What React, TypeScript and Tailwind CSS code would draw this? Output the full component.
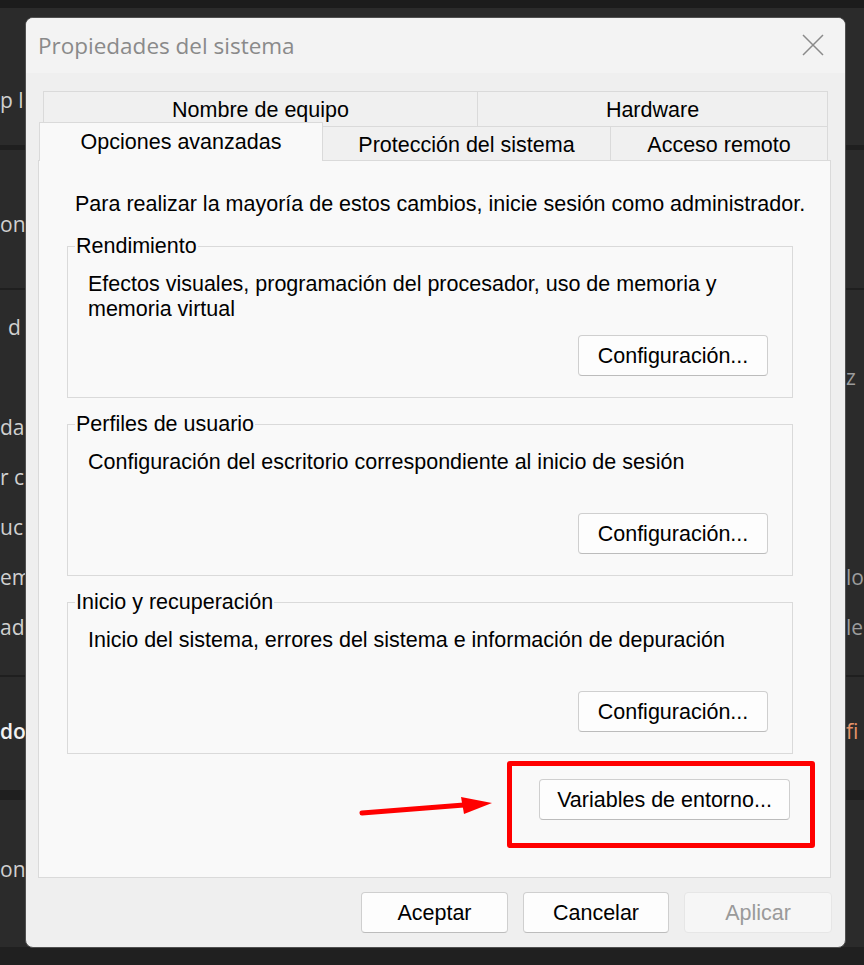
const sans = "font-['Liberation_Sans',Arial,sans-serif]"

interface BgLine {
  left?: string
  right?: string
  strong?: boolean
  accent?: boolean
  indent?: boolean
}

function BgRow({ lines, className, lineClass }: { lines: BgLine[]; className: string; lineClass: string }) {
  return (
    <div className={`flex flex-col bg-[#2b2b2b] ${className}`}>
      {lines.map((l, i) => (
        <div key={i} className={`flex items-center justify-between ${lineClass}`}>
          <div className={`w-[40px] whitespace-nowrap ${l.indent ? 'pl-[8px]' : ''}`}>
            <span className={l.strong ? 'font-semibold text-[#f2f2f2]' : 'text-[#d0d0d0]'}>{l.left ?? ''}</span>
          </div>
          <div className="w-[18px] whitespace-nowrap">
            <span className={l.accent ? 'text-[#e5936a]' : 'text-[#9c9c9c]'}>{l.right ?? ''}</span>
          </div>
        </div>
      ))}
    </div>
  )
}

function WinButton({ label, width, disabled = false }: { label: string; width: string; disabled?: boolean }) {
  return (
    <button
      className={`h-[41px] ${width} rounded-[4px] border pt-[2px] text-[21.5px] leading-none ${
        disabled
          ? 'border-[#e6e6e6] bg-[#f6f6f6] text-[#9a9a9a]'
          : 'border-[#cfcfcf] border-b-[#bcbcbc] bg-[#fdfdfd] text-black'
      }`}
    >
      {label}
    </button>
  )
}

function Group({ title, lines }: { title: string; lines: string[] }) {
  return (
    <fieldset className="ml-[28px] w-[726px] border border-[#dadada] px-[7px]">
      <legend className="px-[1px] pt-[1px] leading-[23px]">{title}</legend>
      <div className="pl-[13px] pt-[14px]">
        <div className="h-[50px] leading-[25px]">
          {lines.map((t) => (
            <p key={t}>{t}</p>
          ))}
        </div>
        <div className="mt-[13px] flex justify-end pb-[21px] pr-[17px]">
          <WinButton label="Configuración..." width="w-[190px]" />
        </div>
      </div>
    </fieldset>
  )
}

export default function App() {
  return (
    <div className="relative h-[965px] w-[864px] overflow-hidden bg-[#1e1e1e] font-['Open_Sans',sans-serif] text-[21px]">
      {/* settings window behind the dialog */}
      <div className="flex flex-col">
        <div className="h-[8px] bg-[#1c1c1c]" />
        <BgRow className="h-[137px] pt-[78px]" lineClass="h-[30px]" lines={[{ left: 'p l' }]} />
        <div className="h-[5px] bg-[#1f1f1f]" />
        <BgRow className="h-[138px] pt-[60px]" lineClass="h-[30px]" lines={[{ left: 'on' }]} />
        <div className="h-[2px] bg-[#1f1f1f]" />
        <BgRow
          className="h-[385px] pt-[13px]"
          lineClass="h-[50px]"
          lines={[
            { left: 'd', indent: true },
            { right: 'z' },
            { left: 'da' },
            { left: 'r c' },
            { left: 'uc' },
            { left: 'em', right: 'lo' },
            { left: 'ad', right: 'le' },
          ]}
        />
        <div className="h-[2px] bg-[#1f1f1f]" />
        <BgRow className="h-[113px] pt-[40px]" lineClass="h-[30px]" lines={[{ left: 'do', strong: true, right: 'fi', accent: true }]} />
        <div className="h-[10px] bg-[#1f1f1f]" />
        <BgRow className="h-[147px] pt-[55px]" lineClass="h-[30px]" lines={[{ left: 'on' }]} />
        <div className="h-[18px] bg-[#202020]" />
      </div>

      {/* dialog */}
      <div className={`absolute left-[25px] top-[17px] flex h-[931px] w-[821px] flex-col overflow-hidden rounded-[8px] border border-[#505050] bg-[#efefef] text-[21.5px] text-black ${sans}`}>
        <div className="flex h-[55px] items-center justify-between bg-[#f3f3f3] pl-[12px] pr-[21px]">
          <span className="font-['Open_Sans',sans-serif] text-[22.5px] text-[#8a8a8a]">Propiedades del sistema</span>
          <svg width="22" height="22" viewBox="0 0 22 22" className="mt-[-2px]">
            <path d="M1 1 L21 21 M21 1 L1 21" stroke="#8a8a8a" strokeWidth="1.5" fill="none" />
          </svg>
        </div>

        <div className="pt-[18px]">
          {/* tabs */}
          <div className="ml-[17px] flex h-[35px]">
            <div className="flex w-[434px] items-center justify-center border-l border-t border-[#dadada] bg-[#f0f0f0] pt-[3px]">
              Nombre de equipo
            </div>
            <div className="flex w-[351px] items-center justify-center border-l border-r border-t border-[#dadada] bg-[#f0f0f0] pt-[3px]">
              Hardware
            </div>
          </div>
          <div className="ml-[13px] flex h-[34px]">
            <div className="relative z-10 -mt-[4px] flex h-[39px] w-[284px] items-center justify-center border-l border-r border-t border-[#dadada] bg-[#f9f9f9]">
              Opciones avanzadas
            </div>
            <div className="flex w-[288px] items-center justify-center border-r border-t border-[#dadada] bg-[#f0f0f0] pt-[3px]">
              Protección del sistema
            </div>
            <div className="flex w-[217px] items-center justify-center border-r border-t border-[#dadada] bg-[#f0f0f0] pt-[3px]">
              Acceso remoto
            </div>
          </div>

          {/* panel */}
          <div className="ml-[12px] flex h-[718px] w-[793px] flex-col border border-[#dadada] bg-[#f9f9f9]">
            <p className="pl-[36px] pt-[31px] leading-[25px]">
              Para realizar la mayoría de estos cambios, inicie sesión como administrador.
            </p>
            <div className="mt-[17px] flex flex-col gap-[14px]">
              <Group title="Rendimiento" lines={['Efectos visuales, programación del procesador, uso de memoria y', 'memoria virtual']} />
              <Group title="Perfiles de usuario" lines={['Configuración del escritorio correspondiente al inicio de sesión']} />
              <Group title="Inicio y recuperación" lines={['Inicio del sistema, errores del sistema e información de depuración']} />
            </div>
            <div className="mr-[15px] mt-[7px] flex items-center justify-end">
              <svg width="136" height="24" viewBox="0 0 136 24" className="mr-[13px]">
                <path d="M4 20 L106 12" stroke="#ff0000" strokeWidth="5" strokeLinecap="round" />
                <polygon points="103,4 134,10 106,21" fill="#ff0000" />
              </svg>
              <div className="rounded-[3px] border-[5px] border-[#ff0000] pb-[23px] pl-[27px] pr-[20px] pt-[13px]">
                <WinButton label="Variables de entorno..." width="w-[251px]" />
              </div>
            </div>
          </div>

          {/* footer buttons */}
          <div className="mt-[14px] flex justify-end gap-[15px] pr-[13px]">
            <WinButton label="Aceptar" width="w-[147px]" />
            <WinButton label="Cancelar" width="w-[146px]" />
            <WinButton label="Aplicar" width="w-[148px]" disabled />
          </div>
        </div>
      </div>
    </div>
  )
}
